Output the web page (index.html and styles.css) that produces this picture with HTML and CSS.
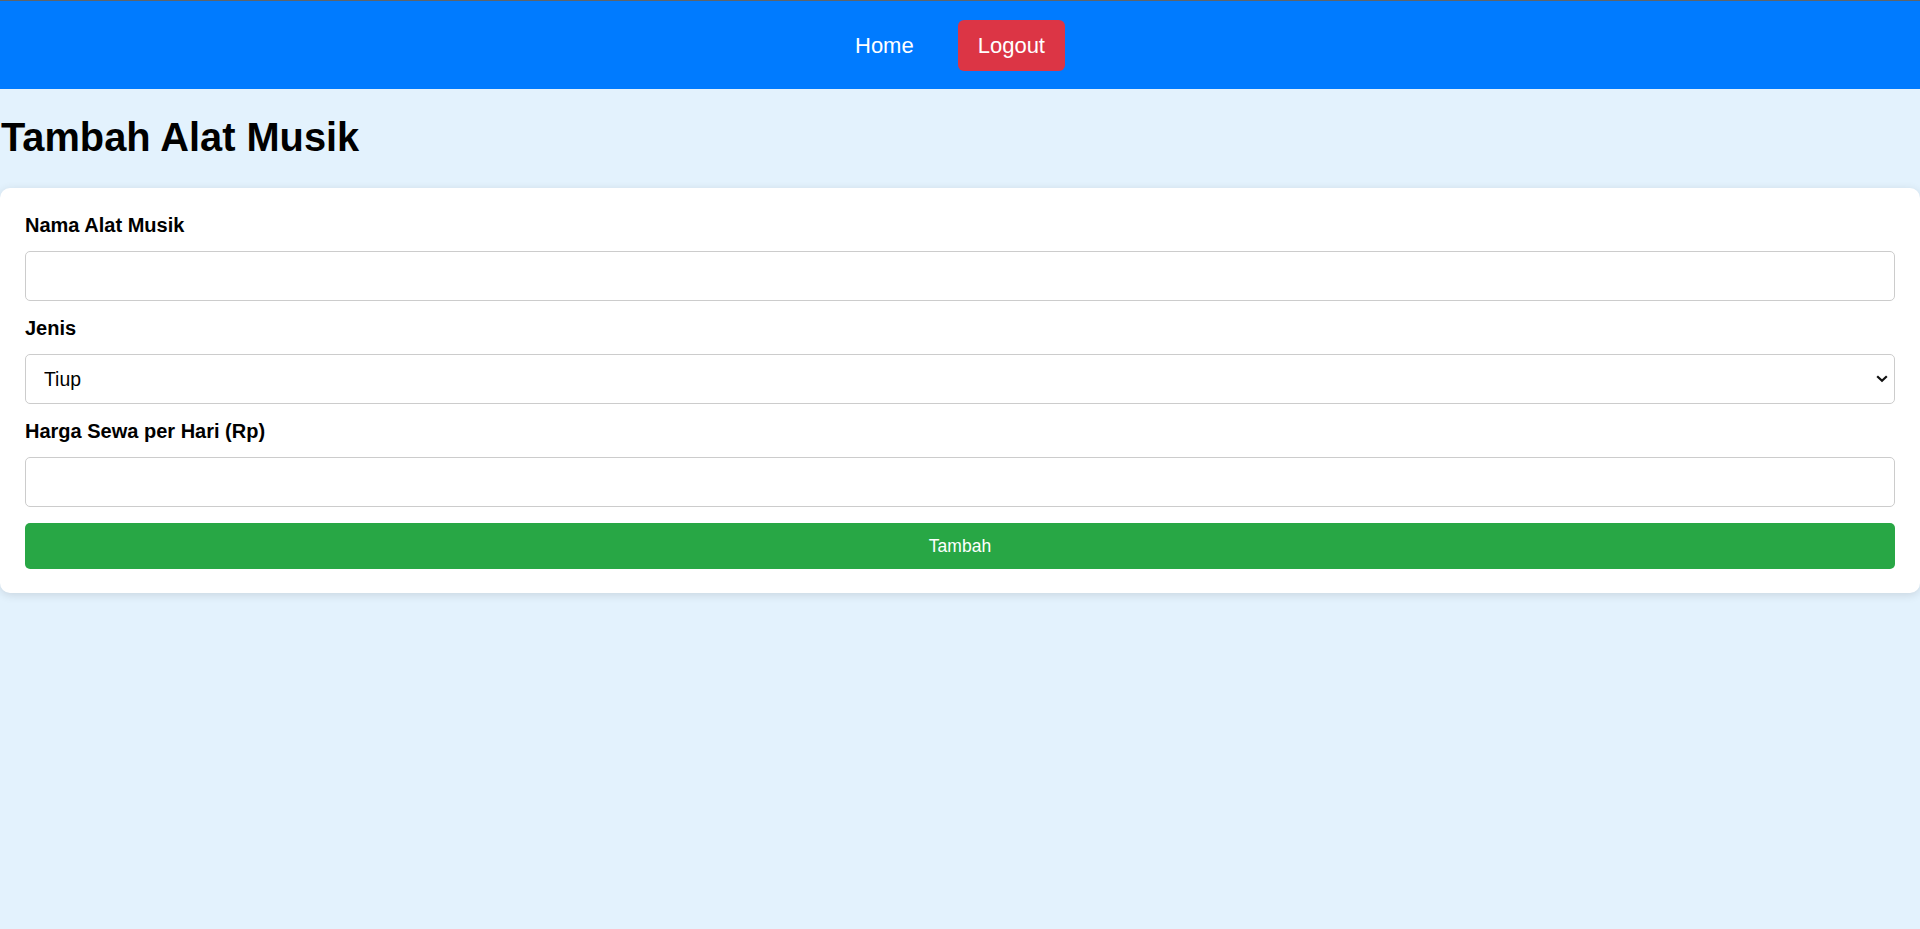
FILE: index.html
```html
<!DOCTYPE html>
<html lang="id">
<head>
<meta charset="utf-8">
<title>Tambah Alat Musik</title>
<link rel="stylesheet" href="styles.css">
</head>
<body>
<nav class="navbar">
  <a class="nav-link" href="#">Home</a>
  <a class="nav-link logout" href="#">Logout</a>
</nav>
<h1 class="page-title">Tambah Alat Musik</h1>
<form class="card">
  <label class="field-label" for="nama">Nama Alat Musik</label>
  <input class="field" id="nama" type="text">
  <label class="field-label" for="jenis">Jenis</label>
  <div class="select-wrap">
    <select class="field select" id="jenis">
      <option>Tiup</option>
      <option>Petik</option>
      <option>Pukul</option>
      <option>Gesek</option>
    </select>
    <svg class="chevron" width="12" height="8" viewBox="0 0 12 8"><path d="M1.2 1.2 L6 5.8 L10.8 1.2" fill="none" stroke="#111" stroke-width="2.2"/></svg>
  </div>
  <label class="field-label" for="harga">Harga Sewa per Hari (Rp)</label>
  <input class="field" id="harga" type="number">
  <button class="submit" type="button">Tambah</button>
</form>
</body>
</html>
```
FILE: styles.css
```css
* { box-sizing: border-box; }

html, body {
  margin: 0;
  padding: 0;
}

body {
  background: #e3f2fd;
  font-family: "Liberation Sans", Arial, sans-serif;
  color: #000;
  min-height: 929px;
}

.navbar {
  height: 89px;
  border-top: 1px solid #5f6469;
  background: #007bff;
  display: flex;
  justify-content: center;
  align-items: center;
  gap: 44px;
}

.nav-link {
  color: #fff;
  text-decoration: none;
  font-size: 22px;
  line-height: 25px;
}

.logout {
  background: #dc3545;
  padding: 13px 20px 13px;
  border-radius: 6px;
}

.page-title {
  font-size: 39.8px;
  line-height: 45px;
  font-weight: bold;
  margin: 26px 0 28px;
  padding-left: 1px;
}

.card {
  background: #fff;
  border-radius: 10px;
  box-shadow: 0 2px 10px rgba(0, 0, 0, 0.12);
  padding: 26px 25px 24px;
  display: flex;
  flex-direction: column;
}

.field-label {
  display: block;
  font-weight: bold;
  font-size: 20px;
  line-height: 22px;
  margin-bottom: 15px;
}

.field {
  display: block;
  width: 100%;
  height: 50px;
  border: 1px solid #cccccc;
  border-radius: 5px;
  background: #fff;
  margin: 0 0 16px;
  font-family: "Liberation Sans", Arial, sans-serif;
  font-size: 19.4px;
  padding: 0 17px;
  color: #000;
  outline: none;
}

.select-wrap {
  position: relative;
}

.select {
  -webkit-appearance: none;
  appearance: none;
  padding-left: 18px;
}

.chevron {
  position: absolute;
  right: 7px;
  top: 21px;
  pointer-events: none;
}

.submit {
  width: 100%;
  height: 46px;
  border: none;
  border-radius: 5px;
  background: #28a745;
  color: #fff;
  font-family: "Liberation Sans", Arial, sans-serif;
  font-size: 17.5px;
  cursor: pointer;
}
```
